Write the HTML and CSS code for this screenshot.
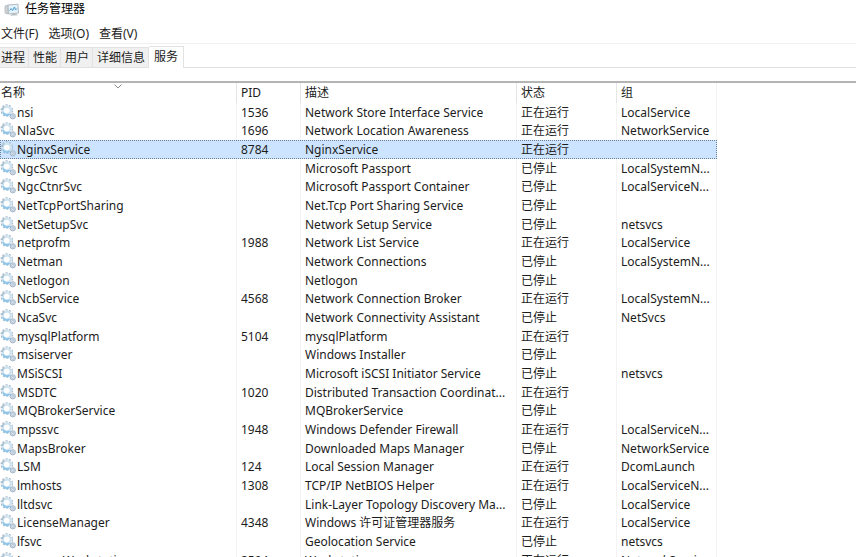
FILE: index.html
```
<!DOCTYPE html>
<html lang="zh-CN">

<head>
    <meta charset="UTF-8">
    <meta name="viewport" content="width=device-width, initial-scale=1.0">
    <title>任务管理器</title>
    <link rel="stylesheet" href="styles.css">
</head>

<body>
    <svg class="sprite" aria-hidden="true">
        <symbol id="gear" viewBox="0 0 16 16">
            <circle cx="6.8" cy="6.500" r="5.600" fill="none" stroke="#a9bccb" stroke-width="1.400" stroke-dasharray="2 1.500" />
            <circle cx="6.800" cy="6.500" r="4" fill="#fff" stroke="#cfe2ef" stroke-width="2.400" />
            <path d="M3 8.500a4.300 4.300 0 0 0 6.500 1.800" fill="none" stroke="#84c3ea" stroke-width="1.700" />
            <path d="M2.300 6a4.600 4.600 0 0 1 2-3.400" fill="none" stroke="#9fb9cb" stroke-width="1.200" />
            <circle cx="12.800" cy="12.300" r="2.600" fill="#d3dfea" stroke="#a2b5c8" />
            <circle cx="12.800" cy="12.300" r="1" fill="#eef3f8" stroke="#9fb2c6" stroke-width=".6" />
        </symbol>
    </svg>

    <header class="title-bar">
        <svg class="app-icon" viewBox="0 0 16 14" aria-hidden="true">
            <path d="M1 3l3-1v9l-3-1z" fill="#cfd3d6" stroke="#b4b9bd" stroke-width=".8" />
            <path d="M4 2l10-.8.5 8.800-10 1z" fill="#e3f1fa" stroke="#b3bbc1" />
            <path d="M5.500 7.500l1.700-2 1.300 2L10.500 4l1 3 1.500-1.500" fill="none" stroke="#4b9bd0" />
            <path d="M6 12.800l2-1.800h4.500l1.500 1.300z" fill="#b9bec2" />
        </svg>
        <h1>任务管理器</h1>
    </header>

    <nav class="menu-bar">
        <button type="button">文件(F)</button>
        <button type="button">选项(O)</button>
        <button type="button">查看(V)</button>
    </nav>

    <div class="tabs" role="tablist">
        <button type="button" role="tab">进程</button>
        <button type="button" role="tab">性能</button>
        <button type="button" role="tab">用户</button>
        <button type="button" role="tab">详细信息</button>
        <button type="button" role="tab" class="active" aria-selected="true">服务</button>
    </div>

    <main class="panel">
        <table class="services">
            <colgroup>
                <col class="col-name">
                <col class="col-pid">
                <col class="col-desc">
                <col class="col-status">
                <col class="col-group">
            </colgroup>
            <thead>
                <tr>
                    <th>名称<svg class="sort" viewBox="0 0 8 5" aria-hidden="true"><path d="M.5.5L4 4L7.500.5" fill="none" stroke="#8a8a8a" /></svg></th>
                    <th>PID</th>
                    <th>描述</th>
                    <th>状态</th>
                    <th>组</th>
                </tr>
            </thead>
            <tbody id="service-list"></tbody>
        </table>
    </main>

    <script>
        const running = '正在运行';
        const stopped = '已停止';
        const services = [
            ['nsi', '1536', 'Network Store Interface Service', running, 'LocalService'],
            ['NlaSvc', '1696', 'Network Location Awareness', running, 'NetworkService'],
            ['NginxService', '8784', 'NginxService', running, ''],
            ['NgcSvc', '', 'Microsoft Passport', stopped, 'LocalSystemN...'],
            ['NgcCtnrSvc', '', 'Microsoft Passport Container', stopped, 'LocalServiceN...'],
            ['NetTcpPortSharing', '', 'Net.Tcp Port Sharing Service', stopped, ''],
            ['NetSetupSvc', '', 'Network Setup Service', stopped, 'netsvcs'],
            ['netprofm', '1988', 'Network List Service', running, 'LocalService'],
            ['Netman', '', 'Network Connections', stopped, 'LocalSystemN...'],
            ['Netlogon', '', 'Netlogon', stopped, ''],
            ['NcbService', '4568', 'Network Connection Broker', running, 'LocalSystemN...'],
            ['NcaSvc', '', 'Network Connectivity Assistant', stopped, 'NetSvcs'],
            ['mysqlPlatform', '5104', 'mysqlPlatform', running, ''],
            ['msiserver', '', 'Windows Installer', stopped, ''],
            ['MSiSCSI', '', 'Microsoft iSCSI Initiator Service', stopped, 'netsvcs'],
            ['MSDTC', '1020', 'Distributed Transaction Coordinat...', running, ''],
            ['MQBrokerService', '', 'MQBrokerService', stopped, ''],
            ['mpssvc', '1948', 'Windows Defender Firewall', running, 'LocalServiceN...'],
            ['MapsBroker', '', 'Downloaded Maps Manager', stopped, 'NetworkService'],
            ['LSM', '124', 'Local Session Manager', running, 'DcomLaunch'],
            ['lmhosts', '1308', 'TCP/IP NetBIOS Helper', running, 'LocalServiceN...'],
            ['lltdsvc', '', 'Link-Layer Topology Discovery Ma...', stopped, 'LocalService'],
            ['LicenseManager', '4348', 'Windows 许可证管理器服务', running, 'LocalService'],
            ['lfsvc', '', 'Geolocation Service', stopped, 'netsvcs'],
            ['LanmanWorkstation', '2504', 'Workstation', running, 'NetworkService']
        ];
        const list = document.getElementById('service-list');

        services.forEach(service => {
            const row = document.createElement('tr');
            if (service[0] === 'NginxService') {
                row.classList.add('selected');
            }
            service.forEach(text => {
                const cell = document.createElement('td');
                cell.textContent = text;
                row.appendChild(cell);
            });
            row.firstChild.innerHTML = `<svg class="gear" aria-hidden="true"><use href="#gear"/></svg>${service[0]}`;
            list.appendChild(row);
        });
    </script>
</body>

</html>
```
FILE: styles.css
```
* {
    box-sizing: border-box;
}

body {
    margin: 0;
    height: 100vh;
    overflow: hidden;
    background: #fff;
    color: #1c1c1c;
    font-family: "Noto Sans", "Noto Sans CJK SC", sans-serif;
    font-size: 12px;
    line-height: 18px;
}

button {
    margin: 0;
    padding: 0;
    border: none;
    background: none;
    color: inherit;
    font: inherit;
}

.sprite {
    display: none;
}

.title-bar {
    display: flex;
    align-items: center;
    gap: 5px;
    height: 18px;
    padding-left: 4px;
}

.app-icon {
    width: 16px;
    height: 14px;
    margin-top: 2px;
}

h1 {
    margin: 0;
    color: #000;
    font-size: 12px;
    font-weight: normal;
}

.menu-bar {
    display: flex;
    gap: 10px;
    height: 26px;
    padding: 6px 0 0 1px;
    border-bottom: 1px solid #f0f0f0;
}

.tabs {
    display: flex;
    align-items: flex-end;
    height: 24px;
    border-bottom: 1px solid #e0e0e0;
}

.tabs button {
    height: 20px;
    padding: 1px 3px 0 4px;
    border: 1px solid #e2e2e2;
    border-left: none;
    border-bottom: none;
    background: #f0f0f0;
}

.tabs button:first-child {
    padding-left: 1px;
}

.tabs .active {
    height: 22px;
    margin-bottom: -1px;
    padding: 0 5px 1px;
    background: #fff;
}

.panel {
    margin-top: 13px;
    border-top: 2px solid #b4b4b4;
}

.services {
    width: 717px;
    table-layout: fixed;
    border-collapse: separate;
    border-spacing: 0;
    white-space: nowrap;
}

.col-name {
    width: 236px;
}

.col-pid {
    width: 64px;
}

.col-desc {
    width: 216px;
}

.col-status {
    width: 100px;
}

th,
td {
    padding: 0 0 0 4px;
    border-left: 1px solid #f3f3f3;
    text-align: left;
    font-weight: normal;
    line-height: 18px;
    overflow: hidden;
}

th {
    position: relative;
    height: 20px;
    border-left-color: #e5e5e5;
}

th:first-child {
    padding-left: 1px;
    border-left: none;
}

.sort {
    position: absolute;
    left: 114px;
    top: 1px;
    width: 8px;
    height: 5px;
}

td {
    height: 19px;
}

/* every third row is a pixel shorter */
tr:nth-child(3n + 2) td {
    height: 18px;
}

td:first-child {
    padding-left: 0;
    border-left: none;
}

th:last-child,
td:last-child {
    border-right: 1px solid #f3f3f3;
}

.gear {
    width: 16px;
    height: 16px;
    margin-right: 1px;
    vertical-align: top;
}

.selected {
    outline: 1px dotted #6a8299;
    outline-offset: -1px;
}

.selected td {
    border-color: #cce4ff;
    background: #cce4ff;
}
```
